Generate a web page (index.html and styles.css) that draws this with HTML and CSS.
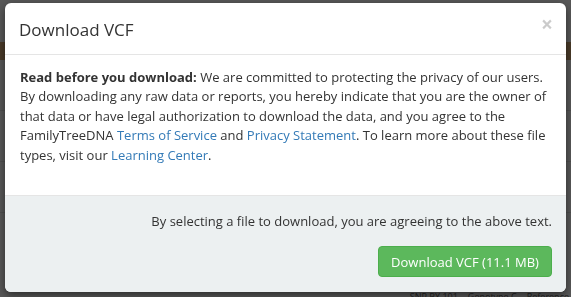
FILE: index.html
```html
<!DOCTYPE html>
<html lang="en">
<head>
    <meta charset="UTF-8">
    <title>Download VCF</title>
    <link rel="stylesheet" href="styles.css">
</head>
<body>

    <div class="page">
        <div class="page-band"></div>
        <div class="page-row"></div>
        <div class="page-row"></div>
        <div class="page-row"></div>
        <div class="page-cols">
            <span>SNP BY 101</span>
            <span>Genotype C</span>
            <span>Reference</span>
        </div>
    </div>

    <div class="backdrop">
        <div class="modal">
            <div class="modal-header">
                <h4>Download VCF</h4>
                <span class="close">&times;</span>
            </div>
            <div class="modal-body">
                <p><strong>Read before you download:</strong> We are committed to protecting the privacy of our users. By downloading any raw data or reports, you hereby indicate that you are the owner of that data or have legal authorization to download the data, and you agree to the FamilyTreeDNA <a href="#">Terms of Service</a> and <a href="#">Privacy Statement</a>. To learn more about these file types, visit our <a href="#">Learning Center</a>.</p>
            </div>
            <div class="modal-footer">
                <p>By selecting a file to download, you are agreeing to the above text.</p>
                <button>Download VCF (11.1 MB)</button>
            </div>
        </div>
    </div>

</body>
</html>
```

FILE: styles.css
```css
/* Page behind the dialog */
html, body {
    margin: 0;
    padding: 0;
    height: 100%;
    font-family: 'Open Sans', sans-serif;
    color: #333;
}

.page {
    height: 100%;
    background: #585858;
    display: flex;
    flex-direction: column;
}

.page-band {
    margin-top: 42px;
    height: 18px;
    background: #4a3b29;
}

.page-row {
    height: 50px;
    border-bottom: 1px solid #4f4f4f;
}

.page-cols {
    margin-top: auto;
    display: flex;
    justify-content: flex-end;
    gap: 10px;
    padding-right: 2px;
    font-size: 9px;
    color: #222;
    line-height: 8px;
    height: 4px;
    overflow: hidden;
}

/* Dialog */
.backdrop {
    position: fixed;
    inset: 0;
}

.modal {
    position: absolute;
    left: 5px;
    top: 3px;
    width: 561px;
    height: 289px;
    background: #fff;
    border-radius: 6px;
    box-shadow: 0 3px 9px rgba(0, 0, 0, 0.5);
    overflow: hidden;
    display: flex;
    flex-direction: column;
}

.modal-header {
    display: flex;
    justify-content: space-between;
    align-items: flex-start;
    height: 51px;
    padding: 0 13px 0 14px;
    border-bottom: 1px solid #e5e5e5;
}

.modal-header h4 {
    margin: 16px 0 0;
    font-size: 17px;
    font-weight: normal;
    line-height: 22px;
}

.close {
    margin-top: 11px;
    font-size: 21px;
    font-weight: bold;
    color: #000;
    opacity: 0.2;
    line-height: 1;
}

.modal-body {
    padding: 13px 15px 0;
    height: 128px;
}

.modal-body p {
    margin: 0;
    font-size: 13px;
    line-height: 19.5px;
}

.modal-body a {
    color: #337ab7;
    text-decoration: none;
}

.modal-footer {
    flex: 1;
    background: #ecf0f1;
    border-top: 1px solid #e5e5e5;
    padding: 15px 14px 15px;
    display: flex;
    flex-direction: column;
    align-items: flex-end;
}

.modal-footer p {
    margin: 0 0 15px;
    font-size: 13px;
    line-height: 20px;
}

button {
    font-family: 'Open Sans', sans-serif;
    font-size: 13px;
    color: #fff;
    background: #5cb85c;
    border: 1px solid #4cae4c;
    border-radius: 4px;
    width: 174px;
    height: 31px;
    padding: 0;
    cursor: pointer;
}
```
